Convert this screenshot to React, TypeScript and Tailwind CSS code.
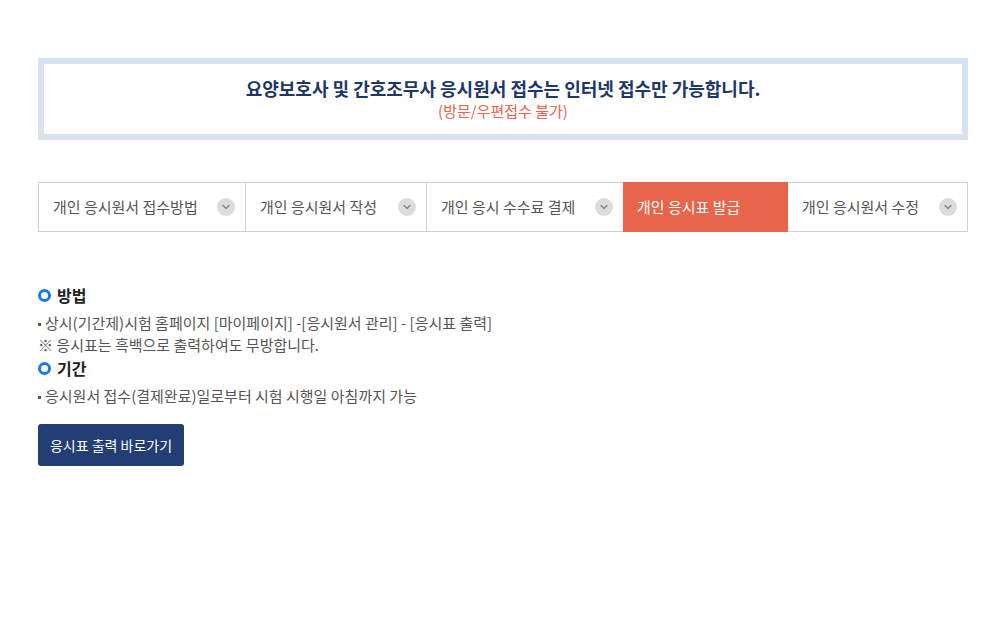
import { ChevronDown } from "lucide-react";

const font = { fontFamily: '"Noto Sans CJK KR", "Noto Sans", sans-serif' };

const tabs = [
  { label: "개인 응시원서 접수방법", width: "w-[208px]" },
  { label: "개인 응시원서 작성", width: "w-[182px]" },
  { label: "개인 응시 수수료 결제", width: "w-[198px]" },
  { label: "개인 응시표 발급", width: "w-[165px]", active: true },
  { label: "개인 응시원서 수정", width: "w-[181px]" },
];

function SectionTitle({ children }: { children: string }) {
  return (
    <div className="flex items-center gap-[6px] h-[24px]">
      <span className="w-[13px] h-[13px] rounded-full border-[3px] border-[#1a7ae6]" />
      <span className="text-[16px] font-bold text-[#222]">{children}</span>
    </div>
  );
}

export default function App() {
  return (
    <div className="w-[993px] h-[628px] bg-white pl-[38px] pt-[58px]" style={font}>
      <div className="w-[930px] h-[82px] border-[6px] border-[#d7e4ef] flex flex-col items-center justify-center">
        <p className="text-[18px] font-bold text-[#1e3769] leading-[24px]">
          요양보호사 및 간호조무사 응시원서 접수는 인터넷 접수만 가능합니다.
        </p>
        <p className="text-[15px] text-[#e8644a] leading-[22px]">(방문/우편접수 불가)</p>
      </div>

      <div className="flex w-[930px] mt-[42px] h-[50px]">
        {tabs.map((t) =>
          t.active ? (
            <div
              key={t.label}
              className={`${t.width} shrink-0 -ml-px relative z-10 h-full bg-[#e8644a] flex items-center pl-[14px] text-[15px] text-white`}
            >
              {t.label}
            </div>
          ) : (
            <div
              key={t.label}
              className={`${t.width} shrink-0 h-full border border-[#d2d2d2] -ml-px first:ml-0 flex items-center justify-between pl-[14px] pr-[10px] text-[15px] text-[#555]`}
            >
              <span>{t.label}</span>
              <span className="w-[18px] h-[18px] rounded-full bg-[#dcdcdc] flex items-center justify-center">
                <ChevronDown className="w-[12px] h-[12px] text-[#8a8a8a]" strokeWidth={3} />
              </span>
            </div>
          )
        )}
      </div>

      <div className="mt-[51px]">
        <SectionTitle>방법</SectionTitle>
        <div className="mt-[5px] text-[15px] text-[#555] leading-[22px]">
          <p>
            <span className="inline-block w-[3px] h-[3px] bg-[#555] align-middle mr-[4px]" />
            상시(기간제)시험 홈페이지 [마이페이지] -[응시원서 관리] - [응시표 출력]
          </p>
          <p>※ 응시표는 흑백으로 출력하여도 무방합니다.</p>
        </div>
        <SectionTitle>기간</SectionTitle>
        <div className="mt-[5px] text-[15px] text-[#555] leading-[22px]">
          <p>
            <span className="inline-block w-[3px] h-[3px] bg-[#555] align-middle mr-[4px]" />
            응시원서 접수(결제완료)일로부터 시험 시행일 아침까지 가능
          </p>
        </div>
        <button className="mt-[17px] w-[146px] h-[42px] bg-[#233e75] rounded-[3px] text-white text-[14px]">
          응시표 출력 바로가기
        </button>
      </div>
    </div>
  );
}
